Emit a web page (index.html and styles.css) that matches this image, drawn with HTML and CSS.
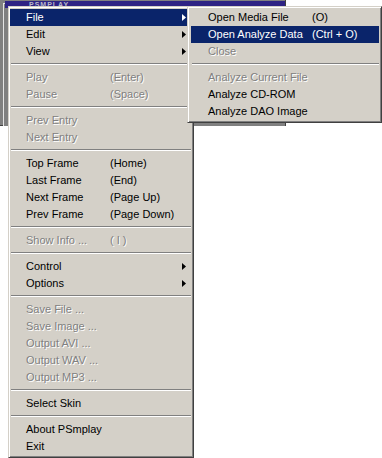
FILE: index.html
```html
<!DOCTYPE html>
<html>
<head>
    <title>PSmplay</title>
    <meta http-equiv="Content-Type" content="text/html; charset=utf-8">
    <link rel="stylesheet" href="styles.css">
</head>
<body>

<div class="app-window">
    <div class="frame">
        <div class="titlebar"><span class="title">PSMPLAY</span></div>
    </div>
</div>

<div class="menu" id="main-menu">
    <div class="item sub active"><span class="label">File</span><span class="key"></span><svg class="arrow" width="4" height="7"><polygon points="0,0 4,3.5 0,7" /></svg></div>
    <div class="item sub"><span class="label">Edit</span><span class="key"></span><svg class="arrow" width="4" height="7"><polygon points="0,0 4,3.5 0,7" /></svg></div>
    <div class="item sub"><span class="label">View</span><span class="key"></span><svg class="arrow" width="4" height="7"><polygon points="0,0 4,3.5 0,7" /></svg></div>
    <div class="sep"></div>
    <div class="item off"><span class="label">Play</span><span class="key">(Enter)</span></div>
    <div class="item off"><span class="label">Pause</span><span class="key">(Space)</span></div>
    <div class="sep"></div>
    <div class="item off"><span class="label">Prev Entry</span></div>
    <div class="item off"><span class="label">Next Entry</span></div>
    <div class="sep"></div>
    <div class="item"><span class="label">Top Frame</span><span class="key">(Home)</span></div>
    <div class="item"><span class="label">Last Frame</span><span class="key">(End)</span></div>
    <div class="item"><span class="label">Next Frame</span><span class="key">(Page Up)</span></div>
    <div class="item"><span class="label">Prev Frame</span><span class="key">(Page Down)</span></div>
    <div class="sep"></div>
    <div class="item off"><span class="label">Show Info ...</span><span class="key">( I )</span></div>
    <div class="sep"></div>
    <div class="item sub"><span class="label">Control</span><span class="key"></span><svg class="arrow" width="4" height="7"><polygon points="0,0 4,3.5 0,7" /></svg></div>
    <div class="item sub"><span class="label">Options</span><span class="key"></span><svg class="arrow" width="4" height="7"><polygon points="0,0 4,3.5 0,7" /></svg></div>
    <div class="sep"></div>
    <div class="item off"><span class="label">Save File ...</span></div>
    <div class="item off"><span class="label">Save Image ...</span></div>
    <div class="item off"><span class="label">Output AVI ...</span></div>
    <div class="item off"><span class="label">Output WAV ...</span></div>
    <div class="item off"><span class="label">Output MP3 ...</span></div>
    <div class="sep"></div>
    <div class="item"><span class="label">Select Skin</span></div>
    <div class="sep"></div>
    <div class="item"><span class="label">About PSmplay</span></div>
    <div class="item"><span class="label">Exit</span></div>
</div>

<div class="menu" id="file-menu">
    <div class="item"><span class="label">Open Media File</span><span class="key">(O)</span></div>
    <div class="item active"><span class="label">Open Analyze Data</span><span class="key">(Ctrl + O)</span></div>
    <div class="item off"><span class="label">Close</span></div>
    <div class="sep"></div>
    <div class="item off"><span class="label">Analyze Current File</span></div>
    <div class="item"><span class="label">Analyze CD-ROM</span></div>
    <div class="item"><span class="label">Analyze DAO Image</span></div>
</div>

</body>
</html>
```

FILE: styles.css
```css
body, html {
    margin: 0;
    padding: 0;
    width: 100%;
    height: 100%;
    background-color: white;
    font-family: 'Liberation Sans', Arial, sans-serif;
    font-size: 11px;
    overflow: hidden;
}

/* the player window behind the menus */
.app-window {
    width: 286px;
    height: 126px;
    padding: 3px 0 0 3px;
    box-sizing: border-box;
    background-color: #808080;
    border-right: 1px solid #404040;
    border-bottom: 1px solid #404040;
}

.frame {
    height: 100%;
    border-top: 1px solid #e4e4e4;
    border-left: 1px solid #e4e4e4;
    padding: 0 0 0 1px;
    background-color: #808080;
}

.titlebar {
    height: 7px;
    margin-top: -3px;
    background-color: #2e2384;
}

.title {
    display: block;
    padding-left: 24px;
    font-size: 7px;
    font-weight: bold;
    line-height: 7px;
    letter-spacing: 1px;
    color: #b8b8c8;
}

/* popup menus */
.menu {
    position: absolute;
    top: 6px;
    box-sizing: border-box;
    background-color: #d4d0c8;
    border: 1px solid;
    border-color: #d4d0c8 #404040 #404040 #d4d0c8;
    box-shadow: inset 1px 1px #fff, inset -1px -1px #808080;
    color: #000;
}

#main-menu {
    left: 8px;
    width: 186px;
    padding: 2px 2px 2px 1px;
}

#file-menu {
    left: 187px;
    width: 195px;
    padding: 2px 2px 2px 3px;
}

.item {
    display: flex;
    align-items: center;
    height: 17px;
    line-height: 17px;
    padding-left: 16px;
    white-space: nowrap;
}

#main-menu .label {
    width: 84px;
}

#file-menu .item {
    padding-left: 17px;
}

#file-menu .label {
    width: 104px;
}

.arrow {
    margin-left: auto;
    margin-right: 5px;
    fill: #000;
}

.item.active {
    background-color: #0a246a;
    color: white;
}

.item.active .arrow {
    fill: white;
}

.item.off {
    color: #808080;
    text-shadow: 1px 1px 0 #fff;
}

.sep {
    height: 9px;
    padding-top: 3px;
    box-sizing: border-box;
}

.sep::before {
    content: "";
    display: block;
    margin: 0 0 0 1px;
    border-top: 1px solid #808080;
    border-bottom: 1px solid #fff;
}
```
